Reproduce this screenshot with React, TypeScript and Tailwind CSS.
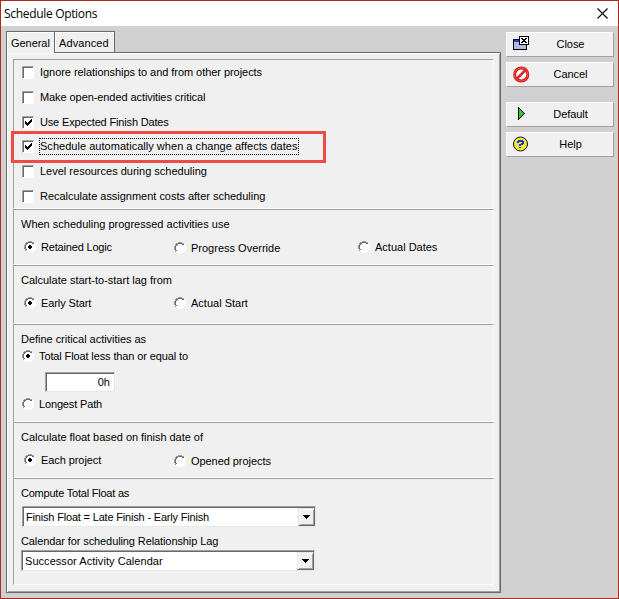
import React from "react";

const field =
  "border border-t-[#a0a0a0] border-l-[#a0a0a0] border-r-[#e8e8e8] border-b-[#e8e8e8] bg-white shadow-[inset_1px_1px_0_#696969]";

function Label({ children, className = "" }: { children: React.ReactNode; className?: string }) {
  return <span className={`block h-[14px] whitespace-nowrap leading-[14px] ${className}`}>{children}</span>;
}

function Check({ label, on, tracking = "", focused }: { label: string; on?: boolean; tracking?: string; focused?: boolean }) {
  return (
    <div className="flex h-[14px] items-center">
      <span className="block h-[13px] w-3 shrink-0 border border-t-[#a0a0a0] border-l-[#a0a0a0] border-r-white border-b-white bg-white shadow-[inset_1px_1px_0_#696969]">
        {on && (
          <svg className="block h-[11px] w-[10px]" viewBox="0 0 10 11" shapeRendering="crispEdges">
            <path d="M2 4h1v1h1v1h1v-1h1v-1h1v-1h1v-1h1v3h-1v1h-1v1h-1v1h-1v1h-1v-1h-1v-1h-1z" fill="#000" />
          </svg>
        )}
      </span>
      <span className={`ml-[5px] flex h-[17px] items-center pl-px pr-px ${focused ? "outline-1 -outline-offset-1 outline-dotted outline-black" : ""}`}>
        <Label className={tracking}>{label}</Label>
      </span>
    </div>
  );
}

function Radio({ label, on, className = "", tracking = "" }: { label: string; on?: boolean; className?: string; tracking?: string }) {
  return (
    <div className={`flex h-[14px] items-center ${className}`}>
      <svg className="block h-3 w-3 shrink-0" viewBox="0 0 12 12" shapeRendering="crispEdges">
        <path d="M4 1h4v1h2v2h1v4h-1v2h-2v1H4v-1H2V8H1V4h1V2h2z" fill="#fff" />
        <path d="M4 0h4v1H4zM2 1h2v1H2zM8 1h2v1H8zM1 2h1v2H1zM0 4h1v4H0zM1 8h1v2H1z" fill="#a0a0a0" />
        <path d="M4 1h4v1H4zM2 2h2v1H2zM8 2h2v1H8zM2 3h1v1H2zM1 4h1v4H1zM2 8h1v1H2z" fill="#696969" />
        <path d="M10 2h1v2h-1zM11 4h1v4h-1zM10 8h1v2h-1zM8 10h2v1H8zM4 11h4v1H4zM2 10h2v1H2z" fill="#fff" />
        {on && <path d="M5 4h2v1h1v2H7v1H5V7H4V5h1z" fill="#000" />}
      </svg>
      <Label className={`ml-[5px] ${tracking}`}>{label}</Label>
    </div>
  );
}

function Group({ className, children }: { className: string; children: React.ReactNode }) {
  return (
    <section className={`border border-t-[#a0a0a0] border-l-[#a0a0a0] border-r-white border-b-white ${className}`}>
      {children}
    </section>
  );
}

function Combo({ value, className = "", tracking }: { value: string; className?: string; tracking: string }) {
  return (
    <div className={`flex h-[21px] w-[294px] justify-between pt-px pl-px ${field} ${className}`}>
      <Label className={`mt-[2px] pl-[2px] ${tracking}`}>{value}</Label>
      <span className="flex h-[18px] w-[17px] items-center justify-center border border-t-[#e3e3e3] border-l-[#e3e3e3] border-r-[#696969] border-b-[#696969] bg-[#f0f0f0] shadow-[inset_1px_1px_0_#fff,inset_-1px_-1px_0_#a0a0a0]">
        <svg className="h-1 w-[7px]" viewBox="0 0 7 4" shapeRendering="crispEdges">
          <path d="M0 0h7v1H6v1H5v1H4v1H3V3H2V2H1V1H0z" />
        </svg>
      </span>
    </div>
  );
}

function SideButton({ label, icon, className = "" }: { label: string; icon: React.ReactNode; className?: string }) {
  return (
    <button className={`flex h-[25px] w-[108px] items-center border border-t-white border-l-white border-r-[#a0a0a0] border-b-[#a0a0a0] bg-[#f0f0f0] pl-[6px] ${className}`}>
      <span className="flex w-[17px] shrink-0 items-center">{icon}</span>
      <span className="flex-1 pr-[3px] pb-[2px] pl-px text-center leading-[14px] tracking-[-0.05px]">{label}</span>
    </button>
  );
}

const closeIcon = (
  <svg className="-mt-[3px] h-4 w-[17px]" viewBox="0 0 17 16" shapeRendering="crispEdges">
    <path d="M0 4h14v11H0z" fill="#000" />
    <path d="M1 7h12v7H1z" fill="#b8b8dc" />
    <path d="M1 5h8v2H1z" fill="#1840e8" />
    <path d="M6 1h10v9H6z" fill="#000" />
    <path d="M7 2h8v7H7z" fill="#fff" />
    <path d="M8 3h2v1h2V3h2v1h-1v1h-1v1h1v1h1v1h-2V7h-2v1H8V7h1V6h1V5H9V4H8z" fill="#000" />
  </svg>
);

const cancelIcon = (
  <svg className="-mt-px h-[17px] w-[17px]" viewBox="0 0 17 17">
    <circle cx="8.2" cy="8.5" r="6.6" fill="#fff" stroke="#d51616" strokeWidth="3" />
    <path d="M4 12.7 12.5 4.2" stroke="#d51616" strokeWidth="2.6" />
    <circle cx="8.2" cy="8.5" r="6.6" fill="none" stroke="#f15a50" strokeWidth="1" />
    <path d="M4.4 12.3 12 4.7" stroke="#ee4037" strokeWidth="1" />
  </svg>
);

const defaultIcon = (
  <svg className="-mt-[2px] ml-[5px] h-[13px] w-[8px]" viewBox="0 0 8 13" shapeRendering="crispEdges">
    <path d="M0 0h1v1h1v1h1v1h1v1h1v1h1v1h1v1H6v1H5v1H4v1H3v1H2v1H1v1H0z" fill="#000" />
    <path d="M1 2h1v1h1v1h1v1h1v1h1v1H5v1H4v1H3v1H2v1H1z" fill="#2fc52f" />
  </svg>
);

const helpIcon = (
  <svg className="-mt-[2px] h-[16px] w-[16px]" viewBox="0 0 16 16">
    <circle cx="7.5" cy="8" r="7" fill="#eee83c" stroke="#111" strokeWidth="1" />
    <path d="M4 5h1V4h5v1h1v3h-1v1H8v1H6V8h2V7h1V6H6v1H4zM6 11h2v1H6z" fill="#1238c8" shapeRendering="crispEdges" />
  </svg>
);

export default function App() {
  return (
    <main className="relative flex h-[599px] w-[619px] flex-col border border-[#a82c1c] bg-[#d0d0d0] font-['Liberation_Sans',Arial,sans-serif] text-[11px] text-black">
      <header className="flex h-[25px] shrink-0 items-center justify-between bg-white pr-[10px] pl-[3px]">
        <h1 className="font-['Open_Sans','Noto_Sans',sans-serif] text-[12px] leading-[16px] tracking-[-0.32px] whitespace-nowrap">Schedule Options</h1>
        <svg className="-mt-px h-[11px] w-[11px]" viewBox="0 0 11 11">
          <path d="M.5.5l10 10M10.5.5l-10 10" stroke="#000" strokeWidth="1.1" />
        </svg>
      </header>

      <div className="flex items-start pl-[5px]">
        <div className="w-[495px] pt-[5px]">
          <nav className="flex h-[21px] items-start">
            <div className="z-10 h-[22px] w-[49px] shrink-0 border-t border-r border-l border-[#696969] bg-[#f0f0f0] pt-[4px] pl-[4px] shadow-[inset_1px_1px_0_#fff]">
              <Label className="tracking-[-0.05px]">General</Label>
            </div>
            <div className="h-[21px] w-[60px] border-t border-r border-[#696969] bg-[#f0f0f0] pt-[4px] pl-[4px] shadow-[inset_1px_1px_0_#fff]">
              <Label className="tracking-[0.1px]">Advanced</Label>
            </div>
          </nav>
          <div className="h-[541px] border border-[#696969] bg-[#f0f0f0] pt-[6px] pl-[6px] shadow-[inset_1px_1px_0_#fff,inset_-1px_-1px_0_#a0a0a0]">
            <div className="w-[481px]">
              <Group className="h-[150px] pt-[5px] pl-[8px]">
                <div className="flex flex-col gap-[11px]">
                  <Check label="Ignore relationships to and from other projects" tracking="tracking-[-0.05px]" />
                  <Check label="Make open-ended activities critical" tracking="tracking-[-0.08px]" />
                  <Check label="Use Expected Finish Dates" on tracking="tracking-[-0.16px]" />
                  <div className="-mt-px">
                    <Check label="Schedule automatically when a change affects dates" on focused tracking="tracking-[0.03px]" />
                  </div>
                  <Check label="Level resources during scheduling" />
                  <Check label="Recalculate assignment costs after scheduling" tracking="tracking-[-0.02px]" />
                </div>
              </Group>
              <Group className="h-[56px] pt-[7px] pl-[7px]">
                <Label>When scheduling progressed activities use</Label>
                <div className="mt-[9px] flex items-start pl-[3px]">
                  <Radio label="Retained Logic" on className="w-[150px]" tracking="tracking-[-0.18px]" />
                  <Radio label="Progress Override" className="mt-px w-[184px]" />
                  <Radio label="Actual Dates" />
                </div>
              </Group>
              <Group className="h-[59px] pt-[7px] pl-[7px]">
                <Label>Calculate start-to-start lag from</Label>
                <div className="mt-[9px] flex items-start pl-[3px]">
                  <Radio label="Early Start" on className="w-[150px]" tracking="tracking-[-0.1px]" />
                  <Radio label="Actual Start" />
                </div>
              </Group>
              <Group className="h-[98px] pt-[7px] pl-[7px]">
                <Label className="tracking-[-0.03px]">Define critical activities as</Label>
                <Radio label="Total Float less than or equal to" on className="mt-[3px] pl-px" tracking="tracking-[-0.12px]" />
                <div className={`mt-[9px] ml-[24px] flex h-[20px] w-[70px] items-center justify-end pr-[4px] ${field}`}>
                  <Label>0h</Label>
                </div>
                <Radio label="Longest Path" className="mt-[5px] pl-px" tracking="tracking-[-0.15px]" />
              </Group>
              <Group className="h-[56px] pt-[7px] pl-[7px]">
                <Label className="tracking-[-0.04px]">Calculate float based on finish date of</Label>
                <div className="mt-[9px] flex items-start pl-[3px]">
                  <Radio label="Each project" on className="w-[150px]" tracking="tracking-[-0.08px]" />
                  <Radio label="Opened projects" className="mt-px" tracking="tracking-[-0.06px]" />
                </div>
              </Group>
              <Group className="h-[107px] pt-[7px] pl-[7px]">
                <Label className="tracking-[-0.22px]">Compute Total Float as</Label>
                <Combo value="Finish Float = Late Finish - Early Finish" className="mt-[6px] ml-px" tracking="tracking-[-0.18px]" />
                <Label className="mt-[7px] tracking-[-0.1px]">Calendar for scheduling Relationship Lag</Label>
                <Combo value="Successor Activity Calendar" className="mt-[2px]" tracking="tracking-[0.05px]" />
              </Group>
            </div>
          </div>
        </div>

        <aside className="ml-[5px] flex flex-col gap-[5px] pt-[6px]">
          <SideButton label="Close" icon={closeIcon} />
          <SideButton label="Cancel" icon={cancelIcon} />
          <SideButton label="Default" icon={defaultIcon} className="mt-[10px]" />
          <SideButton label="Help" icon={helpIcon} />
        </aside>
      </div>

      <div className="pointer-events-none absolute top-[130px] left-[10px] h-[32px] w-[315px] border-3 border-[#ec4b46]" />
    </main>
  );
}
